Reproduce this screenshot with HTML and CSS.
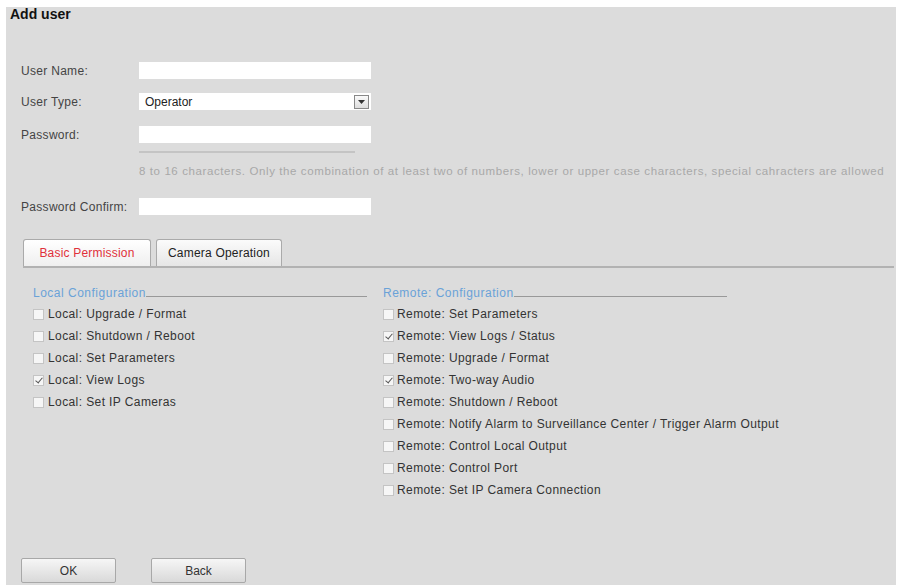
FILE: index.html
```html
<!DOCTYPE html>
<html lang="en">
<head>
    <meta charset="UTF-8">
    <meta name="viewport" content="width=device-width, initial-scale=1.0">
    <title>Add user</title>
    <link rel="stylesheet" href="styles.css">
</head>
<body>
    <div class="panel">
        <h1 class="title">Add user</h1>

        <!-- User fields -->
        <div class="form">
            <div class="row row-name">
                <label class="label">User Name:</label>
                <div class="input"></div>
            </div>
            <div class="row row-type">
                <label class="label">User Type:</label>
                <div class="input select">
                    <span>Operator</span>
                    <span class="arrow"><svg width="7" height="4" viewBox="0 0 7 4"><path d="M0 0h7L3.5 4z" fill="#333"/></svg></span>
                </div>
            </div>
            <div class="row row-pass">
                <label class="label">Password:</label>
                <div class="input"></div>
            </div>
            <div class="strength"></div>
            <p class="hint">8 to 16 characters. Only the combination of at least two of numbers, lower or upper case characters, special cahracters are allowed</p>
            <div class="row">
                <label class="label">Password Confirm:</label>
                <div class="input"></div>
            </div>
        </div>

        <!-- Tabs -->
        <div class="tabs">
            <div class="tab active">Basic Permission</div>
            <div class="tab">Camera Operation</div>
        </div>

        <div class="perms">
            <div class="col col-local">
                <div class="group-title"><span>Local Configuration</span><i></i></div>
                <div class="item"><span class="box"></span>Local: Upgrade / Format</div>
                <div class="item"><span class="box"></span>Local: Shutdown / Reboot</div>
                <div class="item"><span class="box"></span>Local: Set Parameters</div>
                <div class="item"><span class="box checked"></span>Local: View Logs</div>
                <div class="item"><span class="box"></span>Local: Set IP Cameras</div>
            </div>
            <div class="col col-remote">
                <div class="group-title"><span>Remote: Configuration</span><i></i></div>
                <div class="item"><span class="box"></span>Remote: Set Parameters</div>
                <div class="item"><span class="box checked"></span>Remote: View Logs / Status</div>
                <div class="item"><span class="box"></span>Remote: Upgrade / Format</div>
                <div class="item"><span class="box checked"></span>Remote: Two-way Audio</div>
                <div class="item"><span class="box"></span>Remote: Shutdown / Reboot</div>
                <div class="item"><span class="box"></span>Remote: Notify Alarm to Surveillance Center / Trigger Alarm Output</div>
                <div class="item"><span class="box"></span>Remote: Control Local Output</div>
                <div class="item"><span class="box"></span>Remote: Control Port</div>
                <div class="item"><span class="box"></span>Remote: Set IP Camera Connection</div>
            </div>
        </div>

        <div class="buttons">
            <button class="btn">OK</button>
            <button class="btn">Back</button>
        </div>
    </div>
</body>
</html>
```
FILE: styles.css
```css
body {
    margin: 0;
    background: #fff;
    font-family: "Liberation Sans", Arial, sans-serif;
    color: #333;
}
.panel {
    margin: 7px 0 0 6px;
    width: 890px;
    height: 578px;
    box-sizing: border-box;
    background: #dcdcdc;
    display: flex;
    flex-direction: column;
    padding: 0 0 2px 0;
}
.title {
    margin: 0 0 0 4px;
    font-size: 14px;
    line-height: 14px;
    font-weight: bold;
    color: #111;
}
.form {
    margin: 41px 0 0 15px;
}
.row {
    display: flex;
    align-items: center;
    height: 17px;
}
.row-name {
    margin-bottom: 14px;
}
.row-type {
    margin-bottom: 16px;
}
.label {
    width: 118px;
    font-size: 12px;
    letter-spacing: 0.3px;
    color: #444;
}
.input {
    width: 232px;
    height: 17px;
    background: #fff;
    box-sizing: border-box;
}
.select {
    display: flex;
    align-items: center;
    justify-content: space-between;
    padding: 0 2px 0 6px;
    font-size: 12px;
    color: #222;
}
.arrow {
    width: 13px;
    height: 12px;
    border: 1px solid #888;
    background: linear-gradient(#fafafa, #ddd);
    display: flex;
    align-items: center;
    justify-content: center;
}
.strength {
    margin: 8px 0 0 118px;
    width: 216px;
    height: 2px;
    background: #c4c4c4;
}
.hint {
    margin: 11px 0 20px 118px;
    font-size: 11.5px;
    letter-spacing: 0.6px;
    line-height: 14px;
    color: #a8a8a8;
    white-space: nowrap;
}
.tabs {
    margin: 24px 2px 0 17px;
    display: flex;
    gap: 5px;
    border-bottom: 2px solid #b2b2b2;
    height: 27px;
}
.tab {
    height: 27px;
    box-sizing: border-box;
    padding: 0 11px;
    border: 1px solid #aaa;
    border-bottom: none;
    border-radius: 3px 3px 0 0;
    background: linear-gradient(#fbfbfb, #e6e6e6);
    font-size: 12px;
    letter-spacing: 0.2px;
    line-height: 27px;
    color: #222;
}
.tab:first-child {
    width: 128px;
    padding: 0;
    text-align: center;
}
.tab.active {
    color: #e0303a;
    background: linear-gradient(#fff, #efefef);
}
.perms {
    display: flex;
    margin: 16px 0 0 27px;
}
.col-local {
    width: 350px;
}
.group-title {
    display: flex;
    align-items: flex-end;
    font-size: 12px;
    letter-spacing: 0.5px;
    line-height: 14px;
    color: #6aa2d8;
    height: 16px;
    margin-bottom: 3px;
}
.group-title i {
    flex: 1;
    border-bottom: 1px solid #999;
    margin-bottom: 3px;
}
.col-local .group-title {
    width: 334px;
}
.col-remote .group-title {
    width: 344px;
}
.item {
    display: flex;
    align-items: center;
    height: 22px;
    font-size: 12px;
    letter-spacing: 0.4px;
    color: #333;
}
.box {
    width: 9px;
    height: 9px;
    border: 1px solid #c4c4c4;
    background: #f6f6f6;
    margin-right: 4px;
    position: relative;
}
.col-remote .box {
    margin-right: 3px;
}
.box.checked::after {
    content: "";
    position: absolute;
    left: 3px;
    top: 0px;
    width: 3px;
    height: 6px;
    border: solid #555;
    border-width: 0 1px 1px 0;
    transform: rotate(40deg);
}
.buttons {
    margin: auto 0 0 15px;
    display: flex;
    gap: 35px;
}
.btn {
    width: 95px;
    height: 25px;
    border: 1px solid #a8a8a8;
    border-radius: 2px;
    background: linear-gradient(#f6f6f6, #d9d9d9);
    font-family: "Liberation Sans", Arial, sans-serif;
    font-size: 12px;
    color: #333;
    padding: 0;
}
```
